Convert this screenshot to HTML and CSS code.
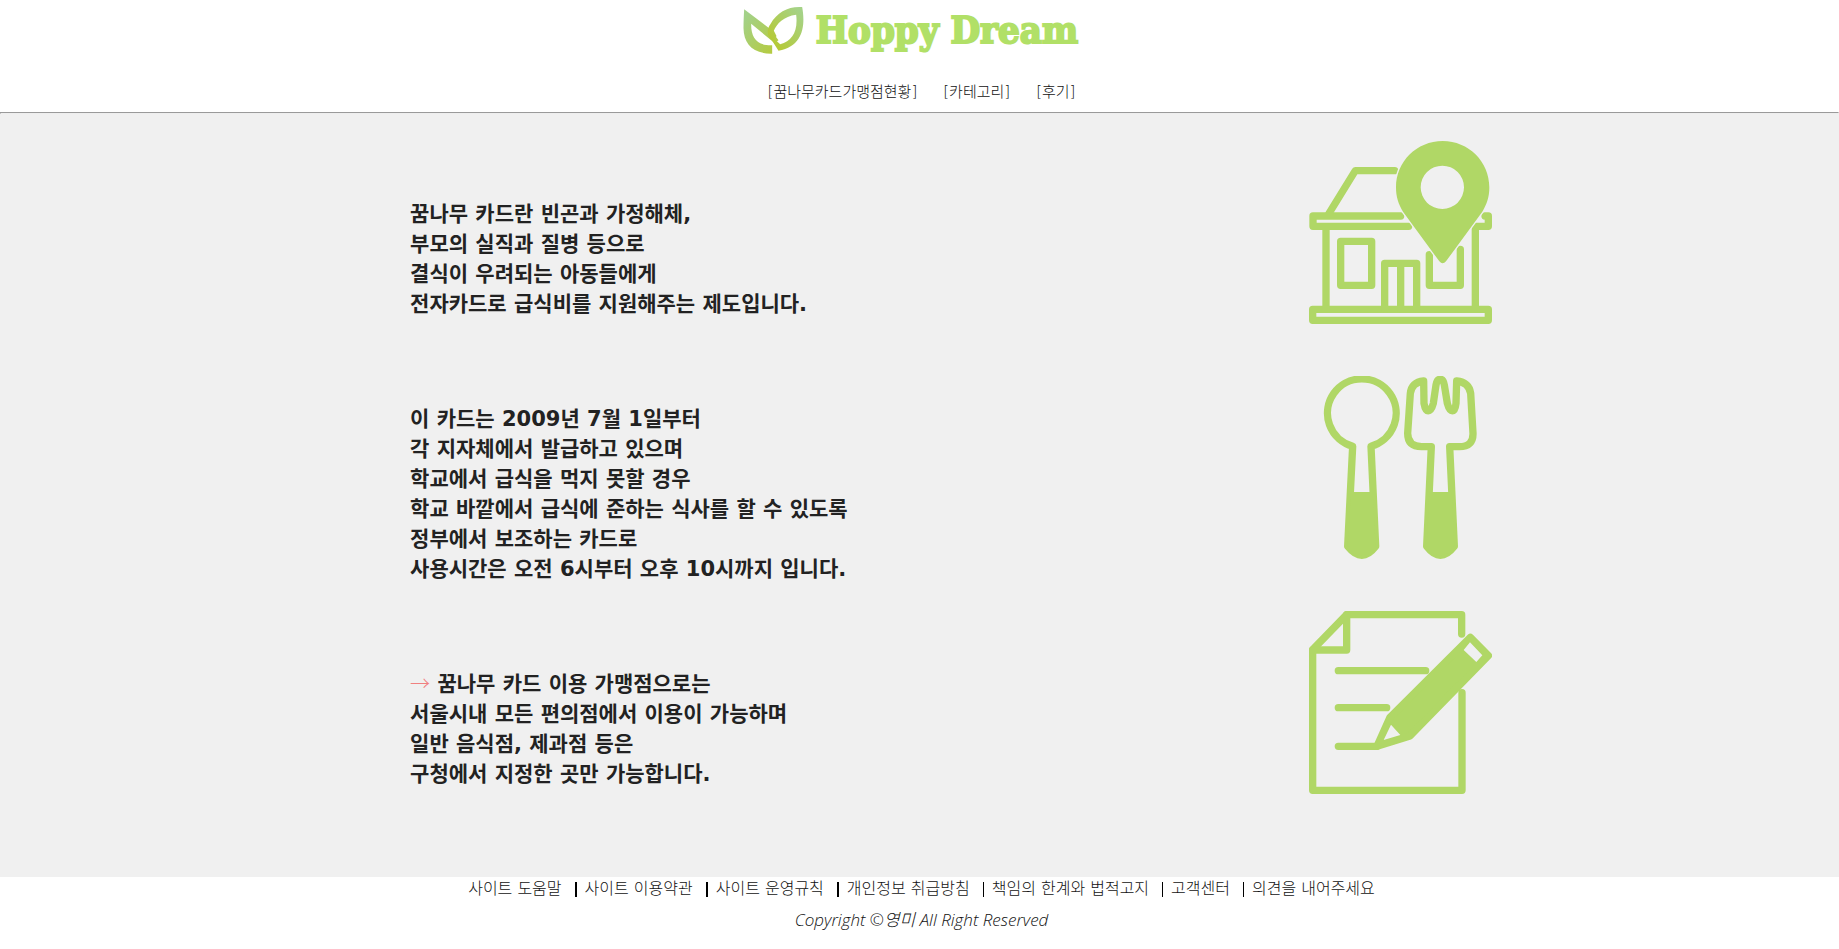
FILE: index.html
```html
<!DOCTYPE html>
<html lang="ko">
<head>
<meta charset="utf-8">
<title>Hoppy Dream</title>
<link rel="stylesheet" href="styles.css">
</head>
<body>
<header class="header">
  <a class="logo" href="#">
    <svg class="logo-mark" viewBox="72 18 182 144" aria-hidden="true">
      <defs>
        <linearGradient id="leaf-left" x1="0" y1="0" x2="1" y2="1">
          <stop offset="0.1" stop-color="#a3d189"/>
          <stop offset="0.9" stop-color="#b5cb40"/>
        </linearGradient>
        <linearGradient id="leaf-right" x1="1" y1="0" x2="0" y2="1">
          <stop offset="0.1" stop-color="#a5d287"/>
          <stop offset="0.9" stop-color="#b7c92f"/>
        </linearGradient>
      </defs>
      <path fill="url(#leaf-left)" d="M75 28L152 86L178 121L166 129L96 71C95 112 113 137 159 136V161C101 162 74 132 73 85C73 64 74 46 75 28Z"/>
      <path fill="url(#leaf-right)" fill-rule="evenodd" d="M249 21C258 70 256 139 178 152L158 121C140 103 144 86 154 72C174 35 209 18 249 21ZM231 44C194 48 172 72 164 92L172 108L167 118L183 133C219 123 237 94 231 44Z"/>
    </svg>
    <span class="logo-text">Hoppy Dream</span>
  </a>
  <nav class="nav">
    <a href="#">[꿈나무카드가맹점현황]</a>
    <a href="#">[카테고리]</a>
    <a href="#">[후기]</a>
  </nav>
</header>
<hr class="rule">
<main class="content">
  <div class="texts">
    <p>꿈나무 카드란 빈곤과 가정해체,<br>부모의 실직과 질병 등으로<br>결식이 우려되는 아동들에게<br>전자카드로 급식비를 지원해주는 제도입니다.</p>
    <p>이 카드는 2009년 7월 1일부터<br>각 지자체에서 발급하고 있으며<br>학교에서 급식을 먹지 못할 경우<br>학교 바깥에서 급식에 준하는 식사를 할 수 있도록<br>정부에서 보조하는 카드로<br>사용시간은 오전 6시부터 오후 10시까지 입니다.</p>
    <p><span class="arrow">→</span> 꿈나무 카드 이용 가맹점으로는<br>서울시내 모든 편의점에서 이용이 가능하며<br>일반 음식점, 제과점 등은<br>구청에서 지정한 곳만 가능합니다.</p>
  </div>
  <div class="icons">
    <svg class="icon" viewBox="57 33 549 549" aria-hidden="true">
      <g class="line">
        <path d="M117 250L196 122H314"/>
        <path d="M332 258H69V289H356M585 258H595V289H556V538M108 289V538"/>
        <path d="M68 538H595V571H68Z"/>
        <path d="M152 334H245V466H152Z"/>
        <path d="M284 538V400H380V538M332 400V538"/>
        <path d="M418 374V466H511V358"/>
      </g>
      <path class="halo" d="M458 33C380 33 318 95 318 172C318 200 325 222 339 245L448 394Q458 406 468 394L577 245C591 222 598 200 598 172C598 95 536 33 458 33Z"/>
      <path class="solid" fill-rule="evenodd" d="M458 33C380 33 318 95 318 172C318 200 325 222 339 245L448 394Q458 406 468 394L577 245C591 222 598 200 598 172C598 95 536 33 458 33ZM457 107A65 65 0 1 1 457 237A65 65 0 1 1 457 107Z"/>
    </svg>
    <svg class="icon" viewBox="57 33 549 549" aria-hidden="true">
      <g class="line">
        <path d="M188 244A103 103 0 1 1 243 244L257 544Q216 598 173 544Z"/>
        <path d="M401 48Q365 52 361 85L353 205Q353 245 395 245H424L410 544Q451 598 493 544L479 245H508Q550 245 549 205L542 85Q537 52 500 48L498 115C495 145 480 145 472 115L463 60C459 37 442 37 438 60L430 115C422 145 407 145 402 115Z"/>
      </g>
      <path class="solid" d="M183 381H248L257 544Q216 598 173 544ZM418 381H485L493 544Q451 598 410 544Z"/>
    </svg>
    <svg class="icon" viewBox="57 33 549 549" aria-hidden="true">
      <g class="line">
        <path d="M515 102V44H170L68 149V571H516V278"/>
        <path d="M170 44V150H68"/>
        <path d="M145 212H407M145 323H290M145 439H261"/>
      </g>
      <path class="halo" d="M541 112L595 167L360 408L261 439L300 352Z"/>
      <path class="pencil" d="M541 112L595 167L360 408L261 439L300 352Z"/>
      <path class="paper" d="M540 127L577 166L559 186L521 150ZM303 374L331 405L281 420Z"/>
    </svg>
  </div>
</main>
<footer class="footer">
  <ul class="links">
    <li><a href="#">사이트 도움말</a></li>
    <li class="thick"><a href="#">사이트 이용약관</a></li>
    <li class="thick"><a href="#">사이트 운영규칙</a></li>
    <li class="thick"><a href="#">개인정보 취급방침</a></li>
    <li><a href="#">책임의 한계와 법적고지</a></li>
    <li><a href="#">고객센터</a></li>
    <li><a href="#">의견을 내어주세요</a></li>
  </ul>
  <p class="copyright">Copyright ©영미 All Right Reserved</p>
</footer>
</body>
</html>
```
FILE: styles.css
```css
* {
  box-sizing: border-box;
}

body {
  margin: 0;
  background: #fff;
  color: #111;
  font-family: "Noto Sans CJK KR", sans-serif;
  font-weight: 300;
}

a {
  color: inherit;
  text-decoration: none;
}

.header {
  display: flex;
  flex-direction: column;
  align-items: center;
  gap: 22px;
  padding: 2px 0 8px;
}

.logo {
  display: flex;
  align-items: center;
  gap: 12px;
  padding-right: 18px;
}

.logo-mark {
  width: 61px;
  height: 48px;
}

.logo-text {
  color: #b1e067;
  font: bold 38px/56px "DejaVu Serif Condensed", "DejaVu Serif", serif;
  -webkit-text-stroke: 2px #b1e067;
}

.nav {
  display: flex;
  gap: 26px;
  padding-left: 4px;
  font-family: "DejaVu Sans", "Noto Sans CJK KR", sans-serif;
  font-size: 15px;
  line-height: 24px;
}

.rule {
  margin: 0;
  border: 1px solid;
  border-color: #9a9a9a #eee #eee #9a9a9a;
}

.content {
  display: flex;
  justify-content: space-between;
  padding: 27px 0 83px;
  background: #f0f0f0;
}

.texts {
  display: flex;
  flex-direction: column;
  gap: 85px;
  margin-left: 22.3%;
  padding-top: 58px;
  color: #222;
  font: bold 21px/30px "DejaVu Sans", "Noto Sans CJK KR", sans-serif;
}

.texts p {
  margin: 0;
}

.arrow {
  color: #f08080;
  font-family: "Noto Sans CJK KR", sans-serif;
  font-size: 20px;
  font-weight: 300;
  line-height: 1;
}

.icons {
  display: flex;
  flex-direction: column;
  gap: 52px;
  margin-right: 18.85%;
}

.icon {
  width: 183px;
  height: 183px;
}

.line,
.pencil {
  fill: none;
  stroke: #b0d766;
  stroke-width: 22;
  stroke-linecap: round;
  stroke-linejoin: round;
}

.pencil,
.solid {
  fill: #b0d766;
}

.halo {
  fill: #f0f0f0;
  stroke: #f0f0f0;
  stroke-width: 8;
}

.pencil {
  stroke-linejoin: round;
}

.paper {
  fill: #f0f0f0;
}

.footer {
  display: flex;
  flex-direction: column;
  align-items: center;
  gap: 7px;
  padding-left: 4px;
  font-size: 16px;
  line-height: 24px;
}

.links {
  display: flex;
  align-items: center;
  gap: 13px;
  margin: 0;
  padding: 0;
  list-style: none;
  font-family: "DejaVu Sans", "Noto Sans CJK KR", sans-serif;
}

.links li {
  display: flex;
  align-items: center;
}

.links li + li::before {
  content: "";
  width: 1px;
  height: 15px;
  margin-right: 8px;
  background: #000;
}

.links li.thick::before {
  width: 2px;
}

.copyright {
  margin: 0;
  font-family: "Open Sans", "Noto Sans CJK KR", sans-serif;
  font-size: 17px;
  font-style: italic;
}
```
